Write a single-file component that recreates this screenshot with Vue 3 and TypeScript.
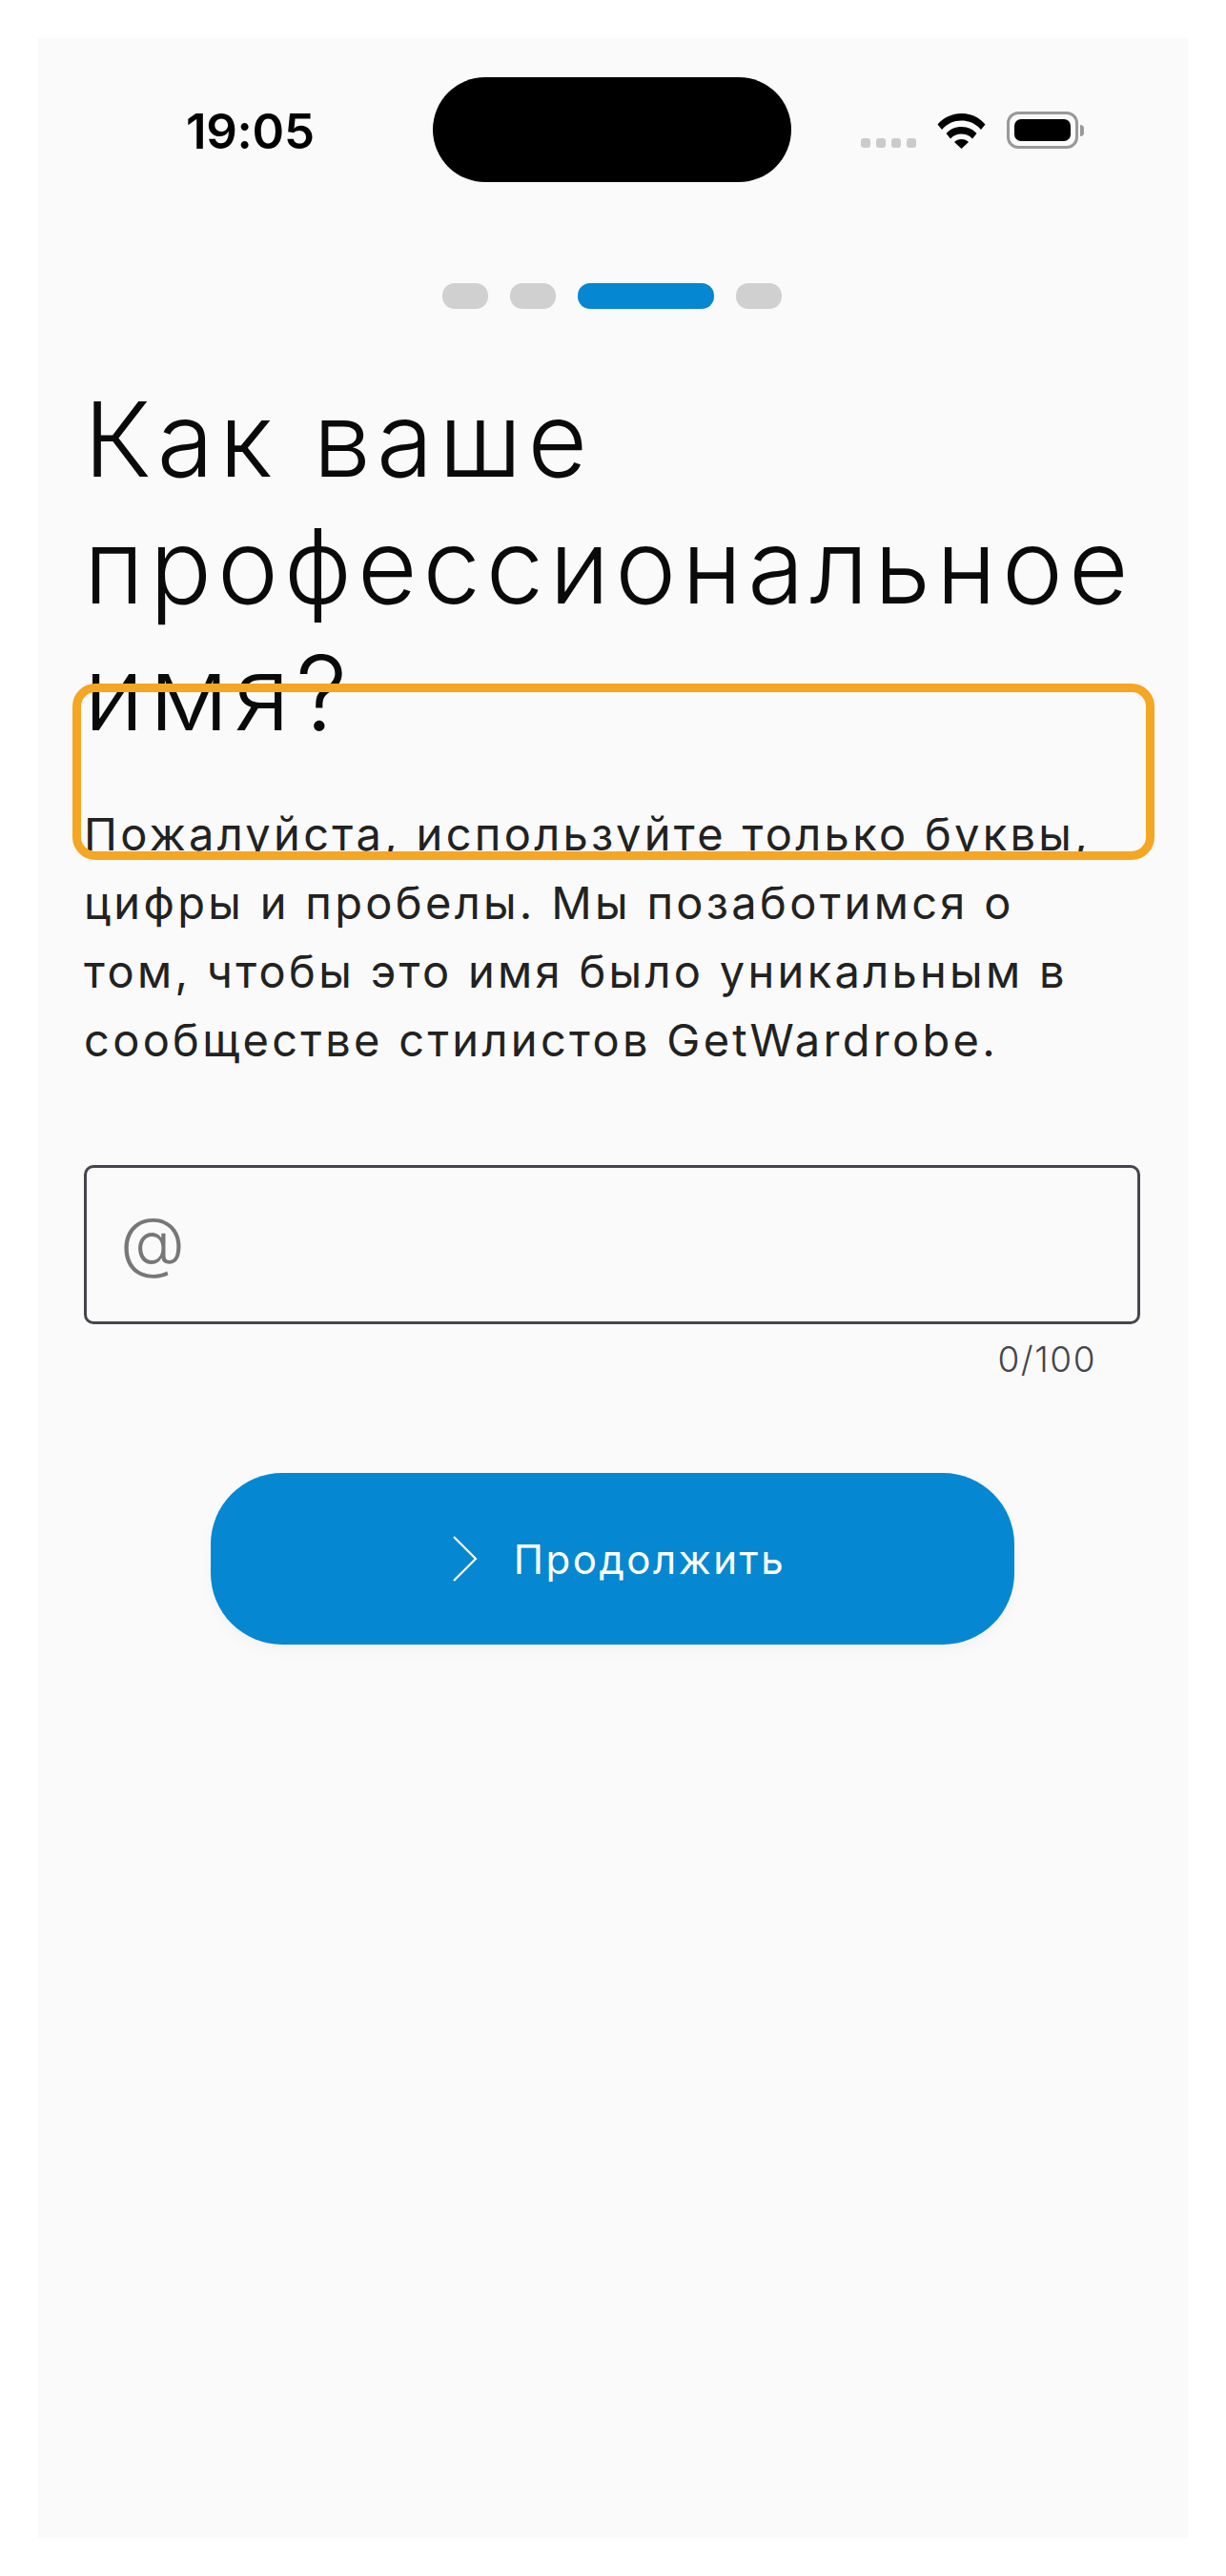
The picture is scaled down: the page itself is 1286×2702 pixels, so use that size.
<template>
  <main class="screen">
    <header class="status-bar">
      <span class="time">19:05</span>
      <div class="island"></div>
      <div class="status-icons">
        <div class="signal">
          <span v-for="n in 4" :key="n"></span>
        </div>
        <svg class="wifi" width="51" height="38" viewBox="0 0 51 38">
          <path d="M0.5 12.5C7 5 16 1 25.5 1S44 5 50.5 12.5L46 18C40.5 11.5 33.5 8.5 25.5 8.5S10.5 11.5 5 18Z" />
          <path d="M9.5 22C13.5 17.5 19 15 25.5 15S37.5 17.5 41.5 22L37 27.5C34 24 30 22.5 25.5 22.5S17 24 14 27.5Z" />
          <path d="M18 31C20 29 22.500 28 25.500 28S31 29 33 31L25.500 38Z" />
        </svg>
        <div class="battery">
          <div class="battery-level"></div>
        </div>
        <div class="battery-nub"></div>
      </div>
    </header>

    <div class="steps">
      <span v-for="step in steps" :key="step" class="step" :class="{ active: step === current }"></span>
    </div>

    <section class="content">
      <h1 class="title">Как ваше профессиональное имя?</h1>
      <p class="hint">
        Пожалуйста, используйте только буквы, цифры и пробелы. Мы позаботимся о том, чтобы это имя было уникальным в сообществе стилистов GetWardrobe.
      </p>

      <label class="field">
        <span class="at">@</span>
      </label>
      <div class="counter">{{ name.length }}/100</div>

      <button class="next" type="button">
        <svg class="chevron" width="28" height="48" viewBox="0 0 28 48" fill="none">
          <path d="M3 1L26 24L3 47" stroke="#fff" stroke-width="2.200" />
        </svg>
        <span>Продолжить</span>
      </button>
    </section>

    <div class="highlight"></div>
  </main>
</template>

<script setup lang="ts">
import { ref } from 'vue'

const steps = [1, 2, 3, 4]
const current = 3
const name = ref('')
</script>

<style>
html,
body {
  background: #fff;
}
</style>

<style scoped>
.screen {
  position: relative;
  box-sizing: border-box;
  width: 1206px;
  height: 2622px;
  margin: 40px;
  background: #fafafa;
  font-family: Inter, "Noto Sans", sans-serif;
  color: #111;
}

.status-bar {
  display: flex;
  align-items: center;
  height: 110px;
  padding-top: 41px;
  padding-left: 155px;
}

.time {
  width: 259px;
  padding-top: 3px;
  font-size: 51px;
  font-weight: 600;
  letter-spacing: -0.3px;
  color: #000;
}

.island {
  width: 376px;
  height: 110px;
  border-radius: 55px;
  background: #000;
}

.status-icons {
  display: flex;
  align-items: flex-end;
  margin-left: 73px;
}

.signal {
  display: flex;
  gap: 6px;
  margin-right: 22px;
  margin-bottom: 1px;
}

.signal span {
  width: 10px;
  height: 10px;
  border-radius: 3px;
  background: #cbcbcb;
}

.wifi {
  fill: #000;
  margin-right: 22px;
}

.battery {
  box-sizing: border-box;
  width: 75px;
  height: 39px;
  padding: 5px;
  border: 3px solid #999;
  border-radius: 12px;
}

.battery-level {
  height: 100%;
  border-radius: 7px;
  background: #000;
}

.battery-nub {
  width: 4px;
  height: 12px;
  margin-left: 2px;
  margin-bottom: 13px;
  border-radius: 0 4px 4px 0;
  background: #999;
}

.steps {
  display: flex;
  justify-content: center;
  gap: 23px;
  margin-top: 106px;
  padding-right: 2px;
}

.step {
  width: 48px;
  height: 27px;
  border-radius: 13px;
  background: #d0d0d0;
}

.step.active {
  width: 143px;
  background: #0588d1;
}

.content {
  padding: 0 40px 0 48px;
}

.title {
  margin: 70px 0 0;
  font-size: 108px;
  font-weight: 300;
  line-height: 133px;
  letter-spacing: 6px;
  color: #0a0a0a;
}

.hint {
  max-width: 1085px;
  margin: 46px 0 0;
  font-size: 47px;
  font-weight: 400;
  line-height: 72px;
  letter-spacing: 3.300px;
  color: #222;
}

.field {
  display: flex;
  align-items: center;
  box-sizing: border-box;
  width: 1108px;
  height: 167px;
  margin-top: 95px;
  padding: 0 0 8px 35px;
  border: 3px solid #45454d;
  border-radius: 10px;
}

.at {
  font-size: 70px;
  font-weight: 300;
  color: #777;
}

.counter {
  width: 1108px;
  margin-top: 14px;
  padding-right: 46px;
  box-sizing: border-box;
  font-size: 37px;
  font-weight: 300;
  letter-spacing: 1.500px;
  text-align: right;
  color: #45454d;
}

.next {
  display: flex;
  align-items: center;
  justify-content: center;
  gap: 38px;
  width: 843px;
  height: 180px;
  margin: 97px 0 0 133px;
  padding: 0 0 0 12px;
  border: 0;
  border-radius: 75px;
  background: #0588d1;
  box-shadow: 0 6px 14px rgba(0, 0, 0, 0.03);
  font-family: inherit;
  font-size: 42px;
  font-weight: 400;
  letter-spacing: 2.500px;
  color: #fff;
}

.highlight {
  position: absolute;
  left: 36px;
  top: 677px;
  width: 1135px;
  height: 185px;
  box-sizing: border-box;
  border: 9px solid #f5a623;
  border-radius: 24px;
}
</style>
